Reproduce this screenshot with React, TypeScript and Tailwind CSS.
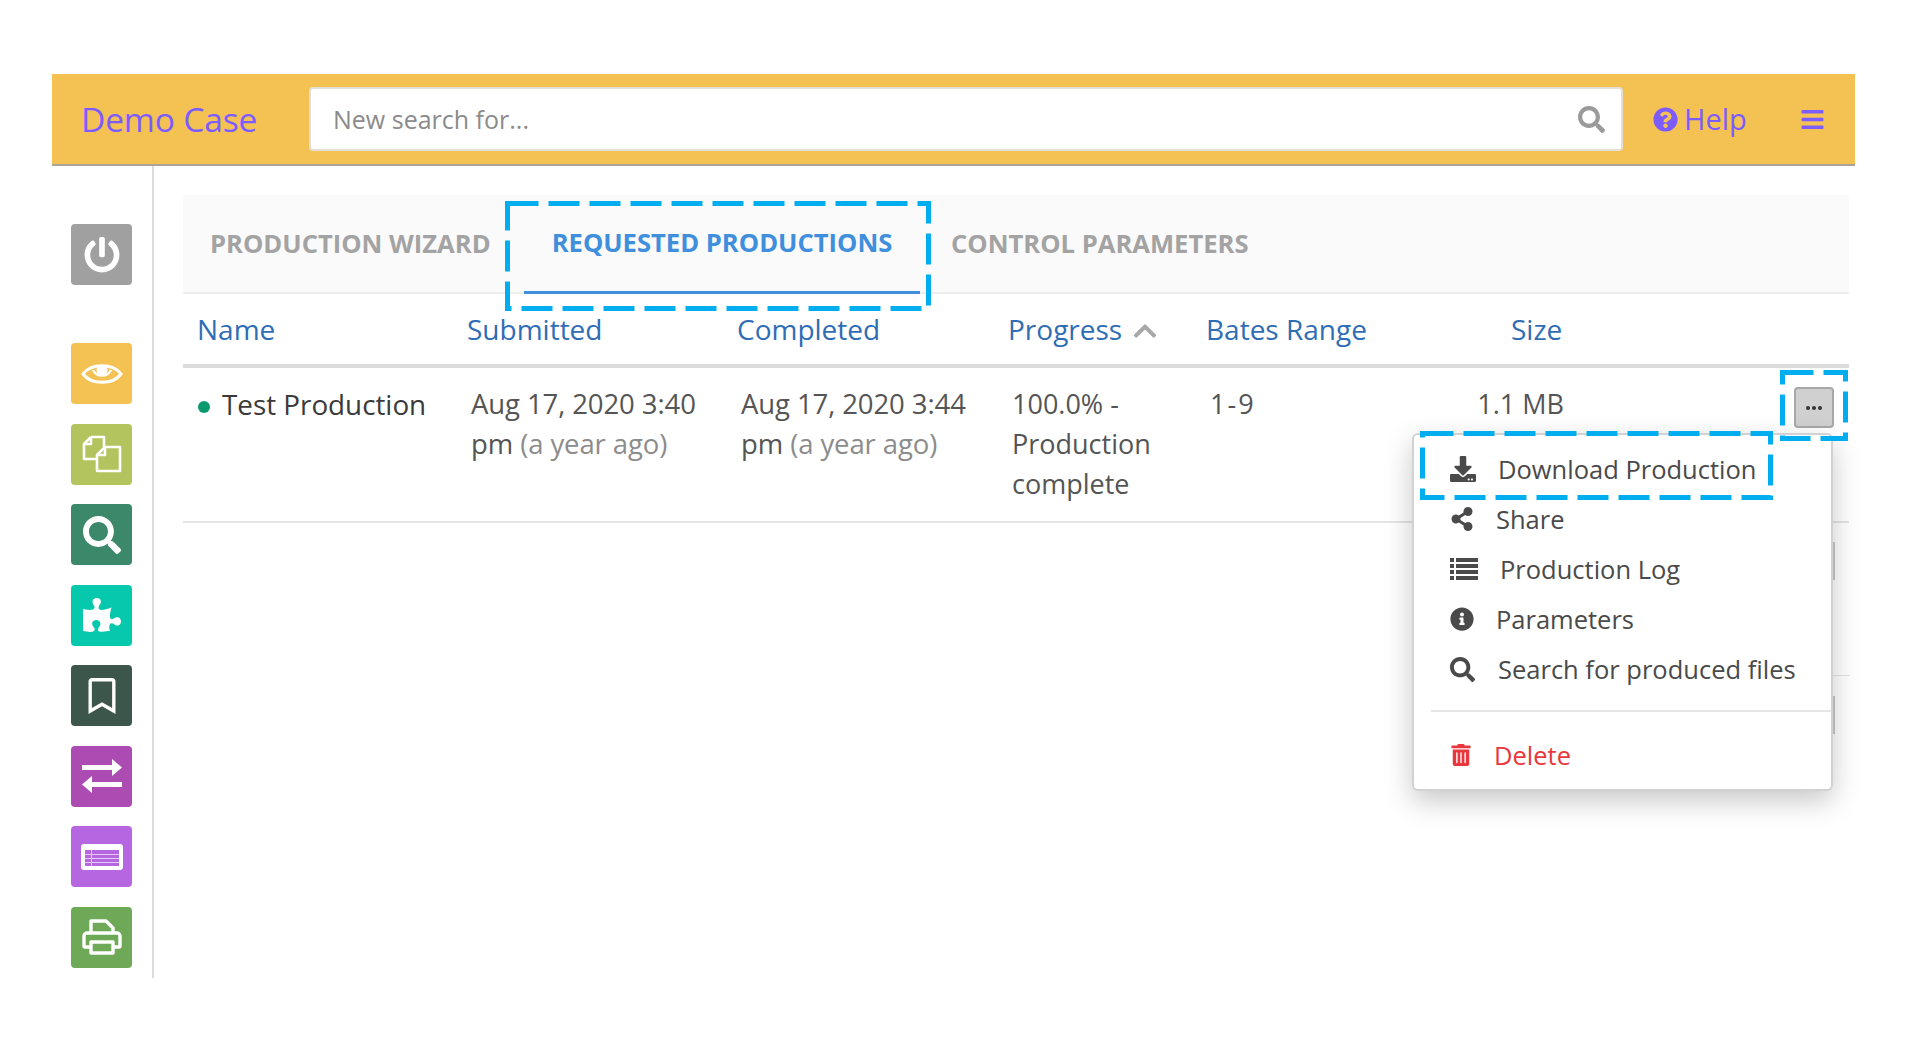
import { FaBars, FaChevronUp, FaDownload, FaInfoCircle, FaPowerOff, FaPuzzlePiece, FaQuestionCircle, FaRegBookmark, FaSearch, FaShareAlt, FaTrashAlt } from 'react-icons/fa';

function EyeIcon() {
    return (
        <svg width="42" height="28" viewBox="0 0 42 28" fill="none" stroke="currentColor">
            <path d="M2 14C10 3 32 3 40 14 32 25 10 25 2 14z" strokeWidth="3" />
            <path d="M12 10a10 10 0 0018 0" strokeWidth="2.4" />
            <circle cx="21" cy="10" r="5.5" fill="currentColor" stroke="none" />
        </svg>
    );
}

function FilesIcon() {
    return (
        <svg width="42" height="40" viewBox="0 0 42 40" fill="none" stroke="currentColor" strokeWidth="2.6" strokeLinejoin="round">
            <path d="M10 3h13v10M10 3L3 10v15h13" />
            <path d="M10 3v7H3" />
            <path d="M24 13h15v24H16V21z" fill="none" />
            <path d="M24 13v8h-8" />
        </svg>
    );
}

function ExchangeIcon() {
    return (
        <svg width="42" height="36" viewBox="0 0 42 36" fill="currentColor">
            <rect x="1" y="7" width="32" height="5" />
            <path d="M31 1l10 8.5L31 18z" />
            <rect x="9" y="24" width="32" height="5" />
            <path d="M11 18L1 26.5 11 35z" />
        </svg>
    );
}

function TableIcon() {
    return (
        <svg width="42" height="26" viewBox="0 0 42 26" fill="currentColor">
            <path fillRule="evenodd" d="M3 0h36a3 3 0 013 3v20a3 3 0 01-3 3H3a3 3 0 01-3-3V3a3 3 0 013-3zM4 6v16h34V6z" />
            <path opacity="0.65" d="M4 10h34v1H4zM4 14h34v1H4zM4 18h34v1H4zM10 6h1v16h-1z" />
        </svg>
    );
}

function PrintIcon() {
    return (
        <svg width="40" height="38" viewBox="0 0 40 38" fill="none" stroke="currentColor" strokeWidth="3.4" strokeLinejoin="round">
            <path d="M9 15V3h15l7 7v5" />
            <path d="M9 29H3a1 1 0 01-1-1V18a3 3 0 013-3h30a3 3 0 013 3v10a1 1 0 01-1 1h-6" />
            <path d="M9 24h22v11H9z" />
        </svg>
    );
}

function ListIcon() {
    return (
        <svg width="28" height="22" viewBox="0 0 28 22" fill="currentColor">
            <path d="M0 0h4v4H0zM6 0h22v4H6zM0 6h4v4H0zM6 6h22v4H6zM0 12h4v4H0zM6 12h22v4H6zM0 18h4v4H0zM6 18h22v4H6z" />
        </svg>
    );
}

const TOOLS = [
    { key: 'eye', bg: 'bg-[#f4c153]', icon: <EyeIcon /> },
    { key: 'docs', bg: 'bg-[#b3c45f]', icon: <FilesIcon /> },
    { key: 'search', bg: 'bg-[#3c886b]', icon: <FaSearch size={38} /> },
    { key: 'puzzle', bg: 'bg-[#05c8ac]', icon: <FaPuzzlePiece size={38} /> },
    { key: 'bookmark', bg: 'bg-[#3c564c]', icon: <FaRegBookmark size={36} /> },
    { key: 'exchange', bg: 'bg-[#ac4bb1]', icon: <ExchangeIcon /> },
    { key: 'list', bg: 'bg-[#b566e0]', icon: <TableIcon /> },
    { key: 'print', bg: 'bg-[#6ea957]', icon: <PrintIcon /> },
];

// blue dashed annotation boxes drawn over the page
function Dashed({ className, w, h }: { className: string; w: number; h: number }) {
    return (
        <svg className={`absolute pointer-events-none ${className}`} width={w} height={h}>
            <rect x={2.5} y={2.5} width={w - 5} height={h - 5} fill="none" stroke="#00aeef" strokeWidth={5} strokeDasharray="31 10" />
        </svg>
    );
}

function MenuItem({ icon, label, gap, red }: { icon: React.ReactNode; label: string; gap: string; red?: boolean }) {
    return (
        <div className={`flex items-center h-[50px] pl-[36px] text-[25.5px] ${gap} ${red ? 'text-[#e8383d]' : 'text-[#4a4a4a]'}`}>
            {icon}
            <span>{label}</span>
        </div>
    );
}

function DateCell({ line1 }: { line1: string }) {
    return (
        <div className="pl-[4px] text-[27.5px] tracking-[-0.1px]">
            <div>{line1}</div>
            <div>pm <span className="text-[#8c8c8c]">(a year ago)</span></div>
        </div>
    );
}

export default function App() {
    return (
        <div className="relative h-[1057px] overflow-hidden bg-white pt-[74px] px-[52px] font-['Open_Sans',sans-serif]">
            {/* Header */}
            <div className="flex items-center h-[92px] w-[1803px] bg-[#f4c153] border-b-2 border-[#a9a39a]">
                <div className="w-[257px] pl-[29px] text-[33.6px] tracking-[-0.2px] text-[#7c5cff]">Demo Case</div>
                <div className="flex items-center justify-between w-[1314px] h-[64px] pl-[22px] pr-[16px] bg-white rounded border-2 border-[#e3dfd6] text-[25px] text-[#8b8b8b]">
                    <span className="pt-[2px]">New search for...</span>
                    <FaSearch size={27} className="text-[#9a9a9a]" />
                </div>
                <div className="flex items-center gap-[6px] ml-[30px] text-[29px] text-[#7c5cff]">
                    <FaQuestionCircle size={25} />
                    <span>Help</span>
                </div>
                <FaBars size={25} className="ml-[53px] text-[#7c5cff]" />
            </div>

            <div className="flex h-[812px]">
                {/* Sidebar */}
                <div className="w-[102px] shrink-0 border-r-2 border-[#dcdcdc] pl-[19px] pt-[58px]">
                    <div className="flex items-center justify-center w-[61px] h-[61px] rounded bg-[#a0a0a0] text-white"><FaPowerOff size={36} /></div>
                    <div className="flex flex-col gap-[19.5px] mt-[58px]">
                        {TOOLS.map(t => (
                            <div key={t.key} className={`flex items-center justify-center w-[61px] h-[61px] rounded text-white ${t.bg}`}>{t.icon}</div>
                        ))}
                    </div>
                </div>

                {/* Content */}
                <div className="w-[1666px] ml-[29px] pt-[29px]">
                    <div className="flex items-stretch h-[99px] bg-[#fafafa] border-b-2 border-[#ededed] text-[25.6px] font-bold text-[#a3a3a3]">
                        <div className="flex items-center pl-[27px] w-[341px] pt-[1px]">PRODUCTION WIZARD</div>
                        <div className="flex items-center justify-center w-[396px] -mb-[2px] pt-[1px] border-b-[3px] border-[#3f8fdc] text-[#3f8fdc]">REQUESTED PRODUCTIONS</div>
                        <div className="flex items-center pl-[31px] pt-[1px]">CONTROL PARAMETERS</div>
                    </div>

                    <div className="grid grid-cols-[270px_270px_271px_198px_305px_1fr] h-[74px] items-center pl-[14px] border-b-[4px] border-[#dcdcdc] text-[28px] text-[#2f6db5]">
                        <div>Name</div>
                        <div>Submitted</div>
                        <div>Completed</div>
                        <div className="flex items-center gap-[10px]">Progress <FaChevronUp size={26} className="text-[#a8a8a8] mt-[3px]" /></div>
                        <div>Bates Range</div>
                        <div>Size</div>
                    </div>

                    <div className="grid grid-cols-[270px_270px_271px_198px_218px_140px] h-[155px] pl-[14px] pt-[16px] border-b-2 border-[#e4e4e4] text-[27px] leading-[40px] text-[#555]">
                        <div className="flex items-start text-[#3a3a3a] text-[27.8px]">
                            <span className="w-[12px] h-[12px] mt-[17px] ml-[1px] mr-[12px] rounded-full bg-[#0a9a6e]" />
                            <span>Test Production</span>
                        </div>
                        <DateCell line1="Aug 17, 2020 3:40" />
                        <DateCell line1="Aug 17, 2020 3:44" />
                        <div className="pl-[4px]">100.0% - Production complete</div>
                        <div className="pl-[4px] tracking-[2px]">1-9</div>
                        <div className="text-right">1.1 MB</div>
                    </div>
                </div>
            </div>

            {/* Row lines showing past the menu's right edge */}
            <div className="absolute left-[1833px] top-[675px] w-[17px] h-[1px] bg-[#e4e4e4]" />
            <div className="absolute left-[1833px] top-[542px] w-[2px] h-[38px] bg-[#c8c8c8]" />
            <div className="absolute left-[1833px] top-[696px] w-[2px] h-[38px] bg-[#c8c8c8]" />

            {/* Row action button */}
            <div className="absolute left-[1794px] top-[387px] flex items-center justify-center gap-[2px] w-[40px] h-[41px] rounded bg-[#d0d0d0] border-2 border-[#a8a8a8]">
                <span className="w-[4px] h-[4px] rounded-full bg-[#333]" />
                <span className="w-[4px] h-[4px] rounded-full bg-[#333]" />
                <span className="w-[4px] h-[4px] rounded-full bg-[#333]" />
            </div>

            {/* Open menu */}
            <div className="absolute left-[1412px] top-[433px] w-[421px] h-[358px] pt-[9px] rounded-md bg-white border-2 border-[#d2d2d2] shadow-[0_10px_28px_rgba(0,0,0,0.22)]">
                <MenuItem icon={<FaDownload size={26} />} label="Download Production" gap="gap-[22px]" />
                <MenuItem icon={<FaShareAlt size={24} />} label="Share" gap="gap-[22px]" />
                <MenuItem icon={<ListIcon />} label="Production Log" gap="gap-[22px]" />
                <MenuItem icon={<FaInfoCircle size={24} />} label="Parameters" gap="gap-[22px]" />
                <MenuItem icon={<FaSearch size={25} />} label="Search for produced files" gap="gap-[23px]" />
                <div className="ml-[17px] mt-[16px] mb-[18px] border-t-2 border-[#e6e6e6]" />
                <MenuItem icon={<FaTrashAlt size={22} />} label="Delete" gap="gap-[22px]" red />
            </div>

            <Dashed className="left-[505px] top-[201px]" w={426} h={110} />
            <Dashed className="left-[1780px] top-[370px]" w={68} h={71} />
            <Dashed className="left-[1420px] top-[431px]" w={353} h={69} />
        </div>
    );
}
